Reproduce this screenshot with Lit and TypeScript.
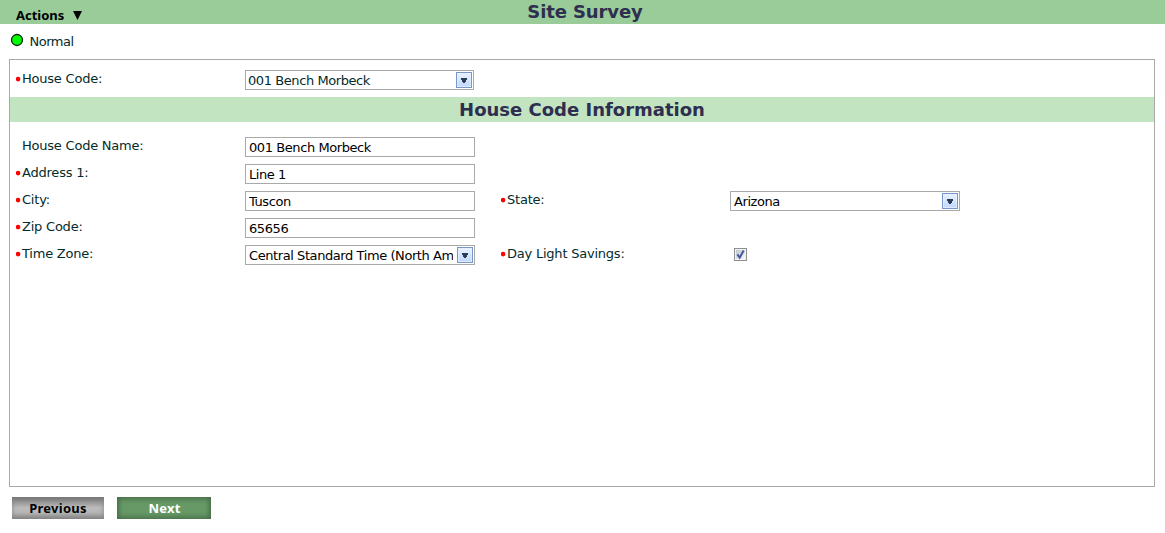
import { LitElement, html, css, nothing } from "lit";
import { customElement, property } from "lit/decorators.js";

@customElement("field-label")
class FieldLabel extends LitElement {
  @property() text = "";
  @property({ type: Boolean }) required = false;
  static styles = css`
    :host { display: flex; height: 20px; color: #032b2b; font-size: 13px; line-height: 17px; letter-spacing: -0.22px; white-space: nowrap; }
    .mark { width: 6px; height: 17px; flex: none; }
    svg { display: block; }
  `;
  render() {
    return html`<span class="mark">${this.required
      ? html`<svg width="6" height="17" viewBox="0 0 6 17"><circle cx="2.1" cy="9.1" r="2.3" fill="#f00"/></svg>`
      : nothing}</span><span>${this.text}</span>`;
  }
}

@customElement("field-box")
class FieldBox extends LitElement {
  @property() value = "";
  @property({ type: Boolean }) select = false;
  static styles = css`
    :host { display: flex; box-sizing: border-box; width: 230px; height: 20px; border: 1px solid #a9a9a9; background: #fff; color: #000; font-size: 13px; line-height: 19px; letter-spacing: -0.42px; }
    .value { flex: 1; min-width: 0; overflow: hidden; white-space: nowrap; margin-left: var(--inset, 3px); }
    .drop { flex: none; margin: 1px 1px 0 4px; width: 16px; height: 16px; }
    svg { display: block; }
  `;
  render() {
    return html`<span class="value">${this.value}</span>${this.select
      ? html`<span class="drop"><svg width="16" height="16" viewBox="0 0 16 16">
          <defs><linearGradient id="g" x2="0" y2="1"><stop stop-color="#eaf3ff"/><stop offset="1" stop-color="#bdd7ff"/></linearGradient></defs>
          <rect x=".5" y=".5" width="15" height="15" fill="url(#g)" stroke="#7896c8"/>
          <rect x="1.5" y="1.5" width="13" height="13" fill="none" stroke="#e6f0ff" stroke-opacity=".8"/>
          <path d="M5 6h6v2h-1v2h-1v1h-2v-1h-1v-2h-1z" fill="#2c3c54"/></svg></span>`
      : nothing}`;
  }
}

@customElement("app-root")
class AppRoot extends LitElement {
  static styles = css`
    :host { display: block; height: 533px; overflow: hidden; background: #fff; font-family: "DejaVu Sans", sans-serif; }
    svg { display: block; }
    .top { display: grid; grid-template-columns: 200px 1fr 195px; height: 24px; background: #9c9; }
    .menu { display: flex; align-items: flex-start; padding: 6px 0 0 16px; gap: 9px; font: bold 13px/18px "Noto Sans", sans-serif; color: #000; }
    .menu svg { margin-top: 5px; }
    .title { text-align: center; font-weight: bold; font-size: 18px; line-height: 24px; color: #2e2e50; letter-spacing: -0.1px; }
    .status { display: flex; height: 35px; padding-left: 10px; box-sizing: border-box; gap: 6px; color: #032b2b; font-size: 13px; line-height: 17px; letter-spacing: -0.5px; padding-top: 9px; }
    .status svg { margin-right: -0.5px; }
    .panel { box-sizing: border-box; margin: 0 10px 0 9px; height: 428px; border: 1px solid #a9a9a9; }
    .code { display: grid; grid-template-columns: 229px 229px; height: 37px; padding: 10px 0 0 6px; box-sizing: border-box; }
    .code field-box { --inset: 2px; width: 229px; color: #032b2b; }
    .heading { height: 25px; background: #c3e4c1; line-height: 25px; text-align: center; font-weight: bold; font-size: 18px; color: #2e2e50; }
    .form { display: grid; grid-template-columns: 229px 256px 229px 230px; grid-auto-rows: 20px; row-gap: 7px; padding: 15px 0 0 6px; }
    .c1 { grid-column: 1; }
    .check { padding: 3px 0 0 4px; }
    .actions { display: flex; gap: 13px; padding: 10px 0 0 12px; }
    .btn { height: 22px; border: 0; padding: 0; font: bold 13px/22px "Noto Sans", sans-serif; letter-spacing: 0.25px; text-align: center; }
    .prev { width: 92px; color: #000; background: linear-gradient(#6e6e6e, #999 25%, #bdbdbd 50%, #b4b4b4 72%, #858585); box-shadow: inset 0 0 5px #858585; }
    .next { width: 94px; padding-left: 1px; color: #fff; background: #669966; box-shadow: inset 0 0 5px 2px #476d48; }
  `;
  render() {
    return html`
      <header class="top">
        <div class="menu"><span>Actions</span><svg width="9" height="9" viewBox="0 0 9 9"><path d="M0 0h9L4.5 9z"/></svg></div>
        <div class="title">Site Survey</div>
      </header>
      <div class="status">
        <svg width="14" height="14" viewBox="0 0 14 14"><circle cx="7" cy="7" r="5.5" fill="#0f0" stroke="#162516" stroke-width="1.3"/></svg>
        <span>Normal</span>
      </div>
      <main class="panel">
        <div class="code">
          <field-label required text="House Code:"></field-label>
          <field-box select value="001 Bench Morbeck"></field-box>
        </div>
        <div class="heading">House Code Information</div>
        <div class="form">
          <field-label text="House Code Name:"></field-label>
          <field-box value="001 Bench Morbeck"></field-box>
          <field-label class="c1" required text="Address 1:"></field-label>
          <field-box value="Line 1"></field-box>
          <field-label class="c1" required text="City:"></field-label>
          <field-box value="Tuscon"></field-box>
          <field-label required text="State:"></field-label>
          <field-box select value="Arizona"></field-box>
          <field-label class="c1" required text="Zip Code:"></field-label>
          <field-box value="65656"></field-box>
          <field-label class="c1" required text="Time Zone:"></field-label>
          <field-box select value="Central Standard Time (North Am"></field-box>
          <field-label required text="Day Light Savings:"></field-label>
          <div class="check"><svg width="13" height="13" viewBox="0 0 13 13">
            <defs><linearGradient id="c" x2="1" y2="1"><stop stop-color="#c0c6ce"/><stop offset="1" stop-color="#f8f8f8"/></linearGradient></defs>
            <rect x=".5" y=".5" width="12" height="12" fill="#f4f4f4" stroke="#8e8f8f"/>
            <rect x="2" y="2" width="9" height="9" fill="url(#c)"/>
            <path d="M3.4 6.4l2.3 3.2L9.7 2.4" fill="none" stroke="#4259a0" stroke-width="2"/></svg></div>
        </div>
      </main>
      <footer class="actions">
        <button class="btn prev">Previous</button>
        <button class="btn next">Next</button>
      </footer>
    `;
  }
}
